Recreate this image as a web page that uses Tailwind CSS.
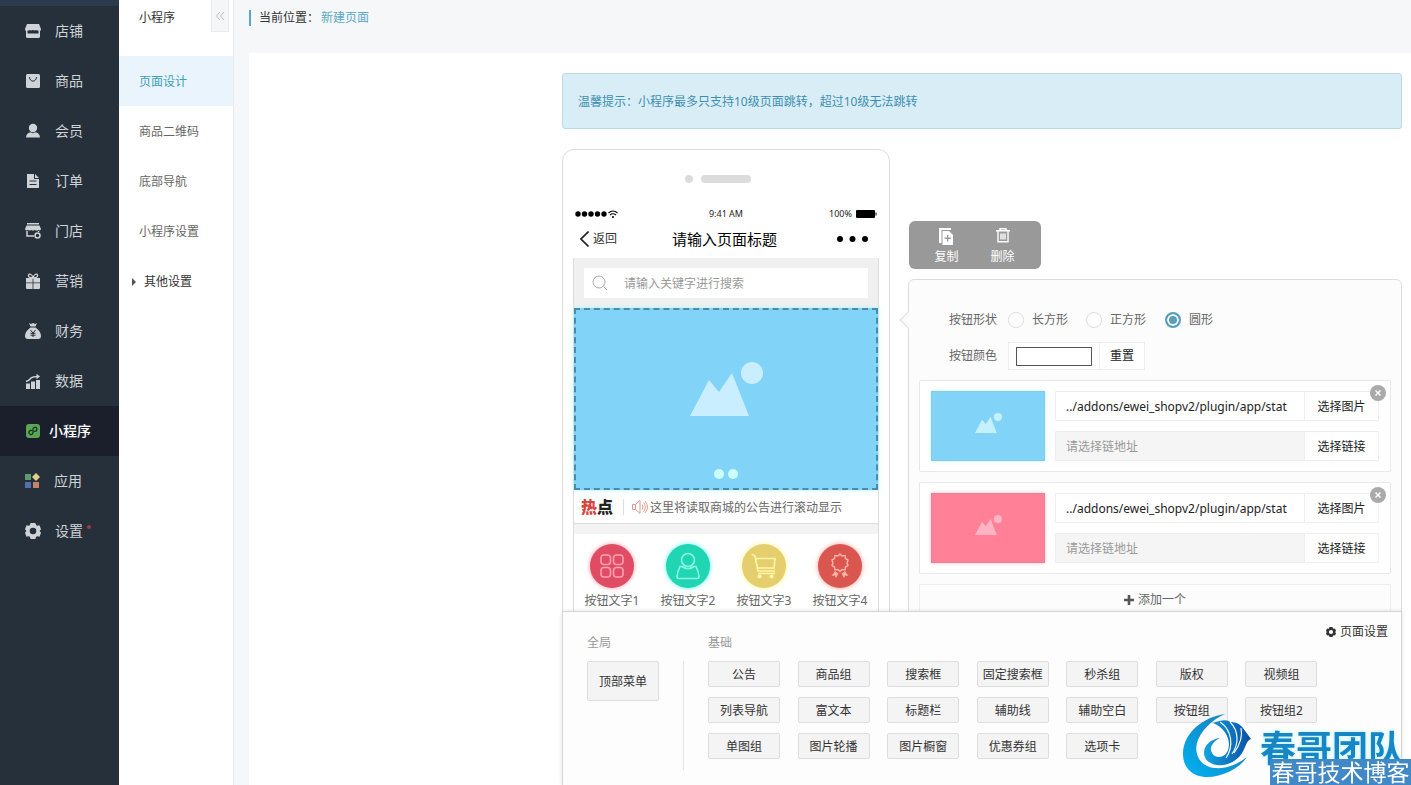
<!DOCTYPE html>
<html lang="zh-CN">
<head>
<meta charset="utf-8">
<title>新建页面</title>
<script src="https://cdn.jsdelivr.net/npm/@tailwindcss/browser@4"></script>
</head>
<body class="flex h-screen overflow-hidden bg-[#f5f7f8] font-['Noto_Sans','Noto_Sans_CJK_SC',sans-serif] text-xs text-[#666]">

<!-- shared symbols -->
<svg class="hidden">
  <symbol id="gear" viewBox="0 0 16 16"><path fill="currentColor" fill-rule="evenodd" d="M5.6 0h4.8l.8 2.2 1.1.6 2.2-.5L16 6.200 14.600 8 16 9.800l-1.500 3.900-2.200-.5-1.100.6-.8 2.200H5.600l-.8-2.200-1.100-.6-2.200.5L0 9.800 1.400 8 0 6.200l1.500-3.900 2.200.5 1.100-.6zM8 4.700a3.300 3.300 0 1 0 0 6.600 3.300 3.300 0 0 0 0-6.600z"/></symbol>
  <symbol id="picture" viewBox="0 0 73 54"><path fill="currentColor" d="M0 54 19 18l10 12L42 11l17 43z"/><circle fill="currentColor" cx="62" cy="11" r="11"/></symbol>
</svg>

<aside class="flex w-[119px] shrink-0 flex-col border-t-[6px] border-[#2b3a4d] bg-[#25303a] text-sm text-[#d0d3d6]">
  <nav class="flex flex-col">
    <a href="#" class="flex h-[50px] items-center gap-3.5 pl-[25px]">
      <svg class="size-4" viewBox="0 0 16 16" fill="currentColor"><path d="M2 1h12l2 5c0 1.200-.5 1.800-1 2v5.500c0 .8-.7 1.500-1.500 1.500h-11C1.700 15 1 14.300 1 13.500V8C.5 7.800 0 7.200 0 6z"/><path fill="#25303a" d="M2.500 7.500c1 .2 1.700-.1 2.300-.6.800.6 1.800.7 3.200 0 1.400.7 2.400.6 3.200 0 .6.500 1.300.8 2.300.6v3h-11z"/></svg>店铺</a>
    <a href="#" class="flex h-[50px] items-center gap-3.5 pl-[25px]">
      <svg class="size-4" viewBox="0 0 16 16"><rect x="1" y="1" width="14" height="14" rx="1.500" fill="currentColor"/><path d="M4.500 4c.2 5.500 6.800 5.500 7 0" fill="none" stroke="#25303a"/></svg>商品</a>
    <a href="#" class="flex h-[50px] items-center gap-3.5 pl-[25px]">
      <svg class="size-4" viewBox="0 0 16 16" fill="currentColor"><circle cx="8" cy="5" r="4.200"/><path d="M1 14.500c0-3 2-5 4.500-5.300L8 10.200l2.500-1C13 9.500 15 11.500 15 14.500z"/></svg>会员</a>
    <a href="#" class="flex h-[50px] items-center gap-3.5 pl-[25px]">
      <svg class="size-4" viewBox="0 0 16 16" fill="currentColor"><path d="M2 1h7v5h5v8.500a.5.500 0 0 1-.5.500h-11a.5.500 0 0 1-.5-.5z"/><path d="m10 1 4 4h-4z"/><path d="M4.500 8h7M4.500 11.500h7" stroke="#25303a" stroke-width="1.200"/></svg>订单</a>
    <a href="#" class="flex h-[50px] items-center gap-3.5 pl-[25px]">
      <svg class="size-4" viewBox="0 0 16 16"><path fill="currentColor" d="M2 0h12v1.500H2zM1.500 2.500h13L16 6c0 1.500-2 2-2.700.7-.8 1.200-2.700 1.200-3.500 0-.8 1.200-2.700 1.200-3.500 0-.8 1.200-2.500 1.200-3.300 0C2.200 8 0 7.500 0 6z"/><path d="M2 8v5h7M13.500 8v1" fill="none" stroke="currentColor" stroke-width="1.500"/><circle cx="12.500" cy="12.500" r="2.500" fill="none" stroke="currentColor" stroke-width="1.500"/></svg>门店</a>
    <a href="#" class="flex h-[50px] items-center gap-3.5 pl-[25px]">
      <svg class="size-4" viewBox="0 0 16 16" fill="currentColor"><path d="M1 5h6.600v4.500H1zM8.400 5H15v4.500H8.400zM1 10.300h6.600V16H2a1 1 0 0 1-1-1zM8.400 10.300H15V15a1 1 0 0 1-1 1H8.400z"/><path d="M8 5C4 5 3 3.500 3.500 2S7 .5 8 5c1-4.500 4-4.500 4.500-3S12 5 8 5z" fill="none" stroke="currentColor" stroke-width="1.300"/></svg>营销</a>
    <a href="#" class="flex h-[50px] items-center gap-3.5 pl-[25px]">
      <svg class="size-4" viewBox="0 0 16 16" fill="currentColor"><path d="m4 0 2 1 2-1 2 1 2-1-1.500 3.500h-5zM5.500 4.500h5C14 7 16 10 16 13c0 2-1 3-3 3H3c-2 0-3-1-3-3 0-3 2-6 5.500-8.500z"/><path d="m5.500 7 2.500 3 2.500-3M8 10v4M5.500 10.300h5M5.500 12.200h5" fill="none" stroke="#25303a"/></svg>财务</a>
    <a href="#" class="flex h-[50px] items-center gap-3.5 pl-[25px]">
      <svg class="size-4" viewBox="0 0 16 16" fill="currentColor"><path d="M1 10.500h4V16H1zM6 8.500h4V16H6zM11 7h4v9h-4z"/><path d="M1 8.500C4 8 5 6 6 5c2-1.500 4-1.500 7-1.500" fill="none" stroke="currentColor" stroke-width="1.500"/><path d="m11.500.8 3.500 2.700-3.500 2.700z"/></svg>数据</a>
    <a href="#" class="flex h-[50px] items-center gap-2 bg-[#1a1f2b] pl-[25px] font-medium text-white">
      <svg class="size-4" viewBox="0 0 16 16"><rect x="1" y="1" width="14" height="14" rx="3" fill="#5aa556"/><path d="M6.500 7.500C4.500 7.200 3.500 9 4.200 10.500 5.200 12.300 8 11.800 8 9.500V6.300C8 4 10.700 3.600 11.700 5.200c.8 1.500-.2 3.300-2.200 3.100" fill="none" stroke="#1a3320" stroke-width="1.300" stroke-linecap="round"/></svg>小程序</a>
    <a href="#" class="flex h-[50px] items-center gap-3.5 pl-[24px]">
      <svg class="size-4" viewBox="0 0 16 16"><path fill="#5d9b6d" d="M1 1h6v6H1z"/><path fill="#e3cf86" d="m12 0 4 4-4 4-4-4z"/><path fill="#5470ac" d="M1 9h6v6H1z"/><path fill="#c58468" d="M9 9h6v6H9z"/></svg>应用</a>
    <a href="#" class="flex h-[50px] items-center pl-[25px]">
      <svg class="mr-3.5 size-4"><use href="#gear"/></svg>设置<span class="mb-2 ml-1 size-1 rounded-full bg-[#a03c3c]"></span></a>
  </nav>
</aside>

<aside class="w-[115px] shrink-0 border-r border-[#e8eaec] bg-white">
  <div class="flex h-14 items-start justify-between pr-1">
    <h2 class="pt-2 pl-5 leading-5 text-[#333]">小程序</h2>
    <button aria-label="收起" class="flex h-8 w-[18px] items-center justify-center border border-t-0 border-[#e9ecef] bg-[#f5f6f8] text-[#b5b9bd]">
      <svg class="size-2.5" viewBox="0 0 10 10" fill="none" stroke="currentColor"><path d="M5 1 1.500 5 5 9M9 1 5.500 5 9 9"/></svg>
    </button>
  </div>
  <nav class="flex flex-col">
    <a href="#" class="flex h-[50px] items-center bg-[#eaf4fc] pt-0.5 pl-5 text-[#3d9fb9]">页面设计</a>
    <a href="#" class="flex h-[50px] items-center pt-0.5 pl-5">商品二维码</a>
    <a href="#" class="flex h-[50px] items-center pt-0.5 pl-5">底部导航</a>
    <a href="#" class="flex h-[50px] items-center pt-0.5 pl-5">小程序设置</a>
    <a href="#" class="flex h-[50px] items-center gap-2 pt-0.5 pl-[13px] text-[#333]"><svg class="h-2 w-1" viewBox="0 0 4 8"><path d="m0 0 4 4-4 4z" fill="#555"/></svg>其他设置</a>
  </nav>
</aside>

<main class="flex min-w-0 flex-1 flex-col pl-[15px]">
  <div class="flex h-[53px] shrink-0 items-start pt-2.5">
    <p class="flex h-4 items-center border-l-2 border-[#5ba7c4] pl-2 text-[#333]">当前位置：<a href="#" class="ml-0.5 text-[#5ba7c4]">新建页面</a></p>
  </div>

  <div class="flex min-h-0 flex-1 justify-end bg-white pr-[9px]">
    <div class="flex w-[840px] flex-col">
      <div class="min-h-0 flex-1 overflow-hidden pt-5">
        <div class="flex h-14 items-center rounded-[3px] border border-[#bcdbe4] bg-[#d9edf6] pt-0.5 pl-[15px] text-[#3d8fb0]">温馨提示：小程序最多只支持10级页面跳转，超过10级无法跳转</div>

        <div class="mt-5 flex items-start justify-between">
          <!-- phone preview -->
          <section class="h-[600px] w-[328px] rounded-xl border border-[#ddd] px-2.5">
            <div class="flex h-[58px] items-center justify-center gap-2 pr-4">
              <i class="size-2 rounded-full bg-[#dcdcdc]"></i><i class="h-2 w-[50px] rounded-full bg-[#dcdcdc]"></i>
            </div>
            <div class="grid h-3 grid-cols-3 items-center px-0.5 text-[9px] leading-3 text-[#222]">
              <svg class="h-2 w-[43px]" viewBox="0 0 43 8"><g fill="#000"><circle cx="3" cy="4" r="2.700"/><circle cx="9.500" cy="4" r="2.700"/><circle cx="16" cy="4" r="2.700"/><circle cx="22.500" cy="4" r="2.700"/><circle cx="29" cy="4" r="2.700"/></g><path d="M33.500 3q4.500-4 9 0M35 5q3-2.500 6 0" fill="none" stroke="#000" stroke-width="1.100"/><circle cx="38" cy="7" r="1"/></svg>
              <span class="text-center">9:41 AM</span>
              <span class="flex items-center justify-end gap-1">100%<svg class="h-2 w-[21px]" viewBox="0 0 21 8"><rect width="19" height="8" rx="1"/><path d="M19.500 2.500h1v3h-1z"/></svg></span>
            </div>
            <div class="grid h-[38px] grid-cols-[1fr_auto_1fr] items-center pr-2.5 pl-[7px]">
              <a href="#" class="flex items-center gap-1 text-[#333]"><svg class="h-4 w-[9px]" viewBox="0 0 9 16"><path d="M8.500.5 1 8l7.500 7.500" fill="none" stroke="#222" stroke-width="1.600"/></svg><span class="text-xs">返回</span></a>
              <h1 class="text-[15px] text-black">请输入页面标题</h1>
              <svg class="h-2 w-8 justify-self-end" viewBox="0 0 32 8"><circle cx="3" cy="4" r="3"/><circle cx="15.500" cy="4" r="3"/><circle cx="28" cy="4" r="3"/></svg>
            </div>
            <div class="h-[480px] border-x border-[#ddd]">
              <div class="h-[50px] bg-[#f0f0f0] p-2.5">
                <label class="flex h-[30px] items-center gap-4 bg-white pl-2">
                  <svg class="size-4 text-[#aaa]" viewBox="0 0 16 16" fill="none" stroke="currentColor"><circle cx="7" cy="7" r="6"/><path d="m11.500 11.500 3.500 3.500"/></svg>
                  <input type="search" aria-label="搜索" placeholder="请输入关键字进行搜索" class="w-56 pt-0.5 outline-none placeholder:text-[#999]">
                </label>
              </div>
              <div class="flex h-[182px] flex-col items-center justify-between border-2 border-dashed border-[#4a8ba6] bg-[#81d4f7] pt-[52px] pb-[9px] shadow-[0_0_5px_#b5f5ff]">
                <svg class="h-[54px] w-[73px] text-[#c9eeff]"><use href="#picture"/></svg>
                <div class="flex gap-1"><i class="size-2.5 rounded-full bg-[#ccffff]"></i><i class="size-2.5 rounded-full bg-[#ccffff]"></i></div>
              </div>
              <div class="flex h-[34px] items-center border-b border-[#ddd] pl-[7px]">
                <span class="text-base font-black text-[#222]"><span class="text-[#d9443f]">热</span>点</span>
                <i class="mr-2 ml-2.5 h-4 w-px bg-[#ddd]"></i>
                <svg class="mr-0.5 h-3.5 w-4" viewBox="0 0 16 14" fill="none" stroke="#dc9a92"><path d="M.5 4.500h3v5h-3zM3.500 4.500l4.500-4v13l-4.500-4M10 4.500q2 2.500 0 5M11.500 2.500q3.500 4.500 0 9M13 1q5 6 0 12"/></svg>
                <span class="pt-0.5">这里将读取商城的公告进行滚动显示</span>
              </div>
              <div class="h-2.5 bg-[#f3f3f3]"></div>
              <div class="grid grid-cols-4 pt-2.5">
                <a href="#" class="flex flex-col items-center gap-[5px]">
                  <span class="flex size-11 items-center justify-center rounded-full bg-[#df4c64] shadow-[0_0_5px_#ff9aa8]"><svg class="size-6" viewBox="0 0 24 24" fill="none" stroke="#ff9fb0" stroke-width="1.600"><rect x="1" y="1" width="9.500" height="9.500" rx="3"/><rect x="13.500" y="1" width="9.500" height="9.500" rx="3"/><rect x="1" y="13.500" width="9.500" height="9.500" rx="3"/><rect x="13.500" y="13.500" width="9.500" height="9.500" rx="3"/></svg></span>按钮文字1</a>
                <a href="#" class="flex flex-col items-center gap-[5px]">
                  <span class="flex size-11 items-center justify-center rounded-full bg-[#1fd5b2] shadow-[0_0_5px_#5cffec]"><svg class="h-7 w-6" viewBox="0 0 24 28" fill="none" stroke="#8dfbe5" stroke-width="1.600"><circle cx="12" cy="8" r="6.500"/><path d="M4 14.500h2q6 4.500 12 0h2q2.500 5 3 10 0 2-2 2H3q-2 0-2-2 .5-5 3-10z"/></svg></span>按钮文字2</a>
                <a href="#" class="flex flex-col items-center gap-[5px]">
                  <span class="flex size-11 items-center justify-center rounded-full bg-[#e4ce6d] shadow-[0_0_5px_#fff38a]"><svg class="h-[26px] w-7" viewBox="0 0 28 26" fill="none" stroke="#fff6a8" stroke-width="1.600"><path d="M1.500 2q3-1 3.500 1.500L8 18h17M6 5.500h19l-1 9.500H8M8 20.500h17" /><circle cx="9.500" cy="23.500" r="1.300" fill="#fff6a8"/><circle cx="21.500" cy="23.500" r="1.300" fill="#fff6a8"/></svg></span>按钮文字3</a>
                <a href="#" class="flex flex-col items-center gap-[5px]">
                  <span class="flex size-11 items-center justify-center rounded-full bg-[#d9574f] shadow-[0_0_5px_#ff9a95]"><svg class="h-[26px] w-5" viewBox="0 0 20 26" fill="none" stroke="#ffb0a8" stroke-width="1.500"><path d="m10 1 2 2 3-.5.5 3 2.500 1.500-1 3 1 2.500-2.500 1.500-.5 3-3-.5-2 2-2-2-3 .5-.5-3L2 12.500 3 10 2 7l2.500-1.500.5-3 3 .5z"/><path d="m5 18-3.500 5 3-.5L6 25l2.500-4.500zM15 18l3.500 5-3-.5L14 25l-2.500-4.500z" fill="#ffb0a8" stroke="none"/></svg></span>按钮文字4</a>
              </div>
            </div>
          </section>

          <!-- element editor -->
          <section class="w-[494px] pt-[72px]">
            <div class="ml-px flex h-12 w-[132px] justify-center gap-8 rounded-md bg-[#999] pt-[7px] pr-px leading-5 text-white">
              <button class="flex flex-col items-center gap-0.5"><svg class="h-[17px] w-4 shrink-0" viewBox="0 0 16 17"><path fill="#fff" d="M1 0h12v2H3.500v13H1z"/><path fill="#fff" fill-rule="evenodd" d="M4.500 3H11l4 4v10H4.500zM9 7v2.500H6.500V11H9v2.500h1.300V11h2.500V9.500h-2.500V7z"/></svg>复制</button>
              <button class="flex flex-col items-center gap-0.5"><svg class="h-[17px] w-4 shrink-0" viewBox="0 0 16 17" fill="none" stroke="#fff" stroke-width="1.400"><path d="M1 2.700h14M5 2V.7h6V2M3 3v10.800h10V3M6 5.500v6M8 5.500v6M10 5.500v6"/></svg>删除</button>
            </div>

            <div class="relative mt-2.5 rounded-md border border-[#ddd] bg-[#fcfcfc] px-2.5 pt-[26px] pb-5">
              <i class="absolute top-[34px] -left-[7px] size-3 rotate-45 border-b border-l border-[#ddd] bg-[#fcfcfc]"></i>
              <fieldset class="flex h-7 items-center pl-[30px]">
                <legend class="float-left w-[59px]">按钮形状</legend>
                <label class="flex w-[78px] items-center gap-2"><input type="radio" name="shape" class="size-4 appearance-none rounded-full border border-[#ddd] bg-white">长方形</label>
                <label class="flex w-[79px] items-center gap-2"><input type="radio" name="shape" class="size-4 appearance-none rounded-full border border-[#ddd] bg-white">正方形</label>
                <label class="flex items-center gap-2"><input type="radio" name="shape" checked class="size-4 appearance-none rounded-full border-2 border-[#569fbd] bg-[#569fbd] shadow-[inset_0_0_0_2px_#fff]">圆形</label>
              </fieldset>
              <div class="mt-2 flex h-7 items-center pl-[30px]">
                <label for="color" class="w-[59px]">按钮颜色</label>
                <span class="flex h-7 w-[92px] items-center justify-center border border-[#eee] bg-white"><input id="color" type="color" value="#ffffff" class="h-[19px] w-[76px] appearance-none border border-[#555] bg-white [&::-webkit-color-swatch]:border-0 [&::-webkit-color-swatch-wrapper]:p-0"></span>
                <button class="-ml-px h-7 w-[46px] border border-[#eee] bg-white text-[#222]">重置</button>
              </div>

              <div class="mt-2.5 flex flex-col gap-2.5">
                <div class="relative flex h-[92px] gap-2.5 rounded-xs border border-[#e8e8e8] bg-white px-[11px] py-2.5">
                  <div class="flex w-[114px] items-center justify-center border border-[#8fc6de] bg-[#81d4f7] pb-1.5 shadow-[0_0_4px_#b5f5ff]"><svg class="h-5 w-[27px] text-[#c3f1ff]"><use href="#picture"/></svg></div>
                  <div class="flex flex-1 flex-col gap-2.5 text-[#222]">
                    <div class="flex h-[30px]"><input aria-label="图片地址" value="../addons/ewei_shopv2/plugin/app/stat" class="min-w-0 flex-1 border border-[#eee] px-2.5 pt-0.5 outline-none"><button class="-ml-px w-[75px] border border-[#eee] bg-white pt-0.5">选择图片</button></div>
                    <div class="flex h-[30px]"><input aria-label="链接地址" placeholder="请选择链地址" class="min-w-0 flex-1 border border-[#eee] bg-[#f5f5f5] px-2.5 pt-0.5 outline-none placeholder:text-[#999]"><button class="-ml-px w-[75px] border border-[#eee] bg-white pt-0.5">选择链接</button></div>
                  </div>
                  <button aria-label="移除" class="absolute top-1 right-1 flex size-4 items-center justify-center rounded-full bg-[#aaa]"><svg class="size-1.5" viewBox="0 0 6 6"><path d="m.5.5 5 5m0-5-5 5" stroke="#fff" stroke-width="1.500"/></svg></button>
                </div>
                <div class="relative flex h-[92px] gap-2.5 rounded-xs border border-[#e8e8e8] bg-white px-[11px] py-2.5">
                  <div class="flex w-[114px] items-center justify-center border border-[#d38a9c] bg-[#ff8097] pb-1.5 shadow-[0_0_4px_#ffb8c4]"><svg class="h-5 w-[27px] text-[#ffb3c3]"><use href="#picture"/></svg></div>
                  <div class="flex flex-1 flex-col gap-2.5 text-[#222]">
                    <div class="flex h-[30px]"><input aria-label="图片地址" value="../addons/ewei_shopv2/plugin/app/stat" class="min-w-0 flex-1 border border-[#eee] px-2.5 pt-0.5 outline-none"><button class="-ml-px w-[75px] border border-[#eee] bg-white pt-0.5">选择图片</button></div>
                    <div class="flex h-[30px]"><input aria-label="链接地址" placeholder="请选择链地址" class="min-w-0 flex-1 border border-[#eee] bg-[#f5f5f5] px-2.5 pt-0.5 outline-none placeholder:text-[#999]"><button class="-ml-px w-[75px] border border-[#eee] bg-white pt-0.5">选择链接</button></div>
                  </div>
                  <button aria-label="移除" class="absolute top-1 right-1 flex size-4 items-center justify-center rounded-full bg-[#aaa]"><svg class="size-1.5" viewBox="0 0 6 6"><path d="m.5.5 5 5m0-5-5 5" stroke="#fff" stroke-width="1.500"/></svg></button>
                </div>
                <button class="flex h-8 items-center justify-center gap-1 border border-[#eee]"><svg class="size-2.5" viewBox="0 0 10 10"><path d="M5 0v10M0 5h10" stroke="#555" stroke-width="2.600"/></svg>添加一个</button>
              </div>
            </div>
          </section>
        </div>
      </div>

      <!-- component palette -->
      <section class="relative flex h-[174px] shrink-0 border border-b-0 border-[#d5d5d5] bg-[#fdfdfd] pt-5 pl-6 text-[#333] shadow-[0_0_4px_#0000001f]">
        <div class="w-[97px]">
          <h3 class="h-[29px] leading-[22px] text-[#999]">全局</h3>
          <div class="h-[109px] border-r border-[#e5e5e5]"><button class="h-10 w-[72px] rounded-xs border border-[#ddd] bg-[#f4f4f4] pt-0.5">顶部菜单</button></div>
        </div>
        <div class="pl-6">
          <h3 class="h-[29px] leading-[22px] text-[#999]">基础</h3>
          <div class="grid w-[627px] grid-cols-7 gap-y-2.5 [&>button]:h-[26px] [&>button]:w-[72px] [&>button]:rounded-xs [&>button]:border [&>button]:border-[#ddd] [&>button]:bg-[#f4f4f4] [&>button]:pt-0.5">
            <button>公告</button><button>商品组</button><button>搜索框</button><button>固定搜索框</button><button>秒杀组</button><button>版权</button><button>视频组</button>
            <button>列表导航</button><button>富文本</button><button>标题栏</button><button>辅助线</button><button>辅助空白</button><button>按钮组</button><button>按钮组2</button>
            <button>单图组</button><button>图片轮播</button><button>图片橱窗</button><button>优惠券组</button><button>选项卡</button>
          </div>
        </div>
        <button class="absolute top-2.5 right-[13px] flex items-center gap-1 leading-5"><svg class="size-2.5"><use href="#gear"/></svg>页面设置</button>
      </section>
    </div>
  </div>
</main>

<!-- watermark -->
<div class="fixed right-0 bottom-0 h-[72px] w-[230px]">
  <svg class="absolute top-0 left-0 h-[66px] w-[72px]" viewBox="0 0 72 66">
    <defs><linearGradient id="wave" x1="0" y1="1" x2="1" y2="0"><stop offset="0" stop-color="#00b4f2"/><stop offset=".5" stop-color="#0d93d3"/><stop offset="1" stop-color="#1f7fb0"/></linearGradient>
    <linearGradient id="leaf" x1="0" y1="0" x2="1" y2="0"><stop offset="0" stop-color="#10a5e2"/><stop offset="1" stop-color="#0b4fa6"/></linearGradient></defs>
    <path fill="url(#wave)" d="M44 1C22 4 2 20 2 41c0 14 10 23 24 23 15 0 32-8 40-20-10 8-22 12-32 11C20 54 13 42 16 30 19 19 30 7 44 1z"/>
    <path fill="url(#leaf)" d="M32 10c10-4 15-3 17-1 6 0 10 2 13 6l8 11c-6 2-5 11-12 18-6 6-14 9-22 8-8-1-13-6-13-12 0-8 7-14 16-15-8 4-11 10-8 15 2 4 7 5 11 3 10-5 8-26-10-33z"/>
    <path d="M39 9c12 8 14 24 6 36M49 9c9 9 9 22 2 32M60 15c2 9-2 18-7 25" fill="none" stroke="#f0faff" stroke-width="1.200"/>
  </svg>
  <p class="absolute top-2.5 right-[7px] text-4xl leading-[52px] font-bold text-[#1687c4] [text-shadow:0_0_4px_#b5f0ff]">春哥团队</p>
  <p class="absolute right-0 bottom-0 h-[26px] w-[141px] bg-[#4188c6] text-center text-[23px] leading-[26px] text-white">春哥技术博客</p>
</div>
</body>
</html>
